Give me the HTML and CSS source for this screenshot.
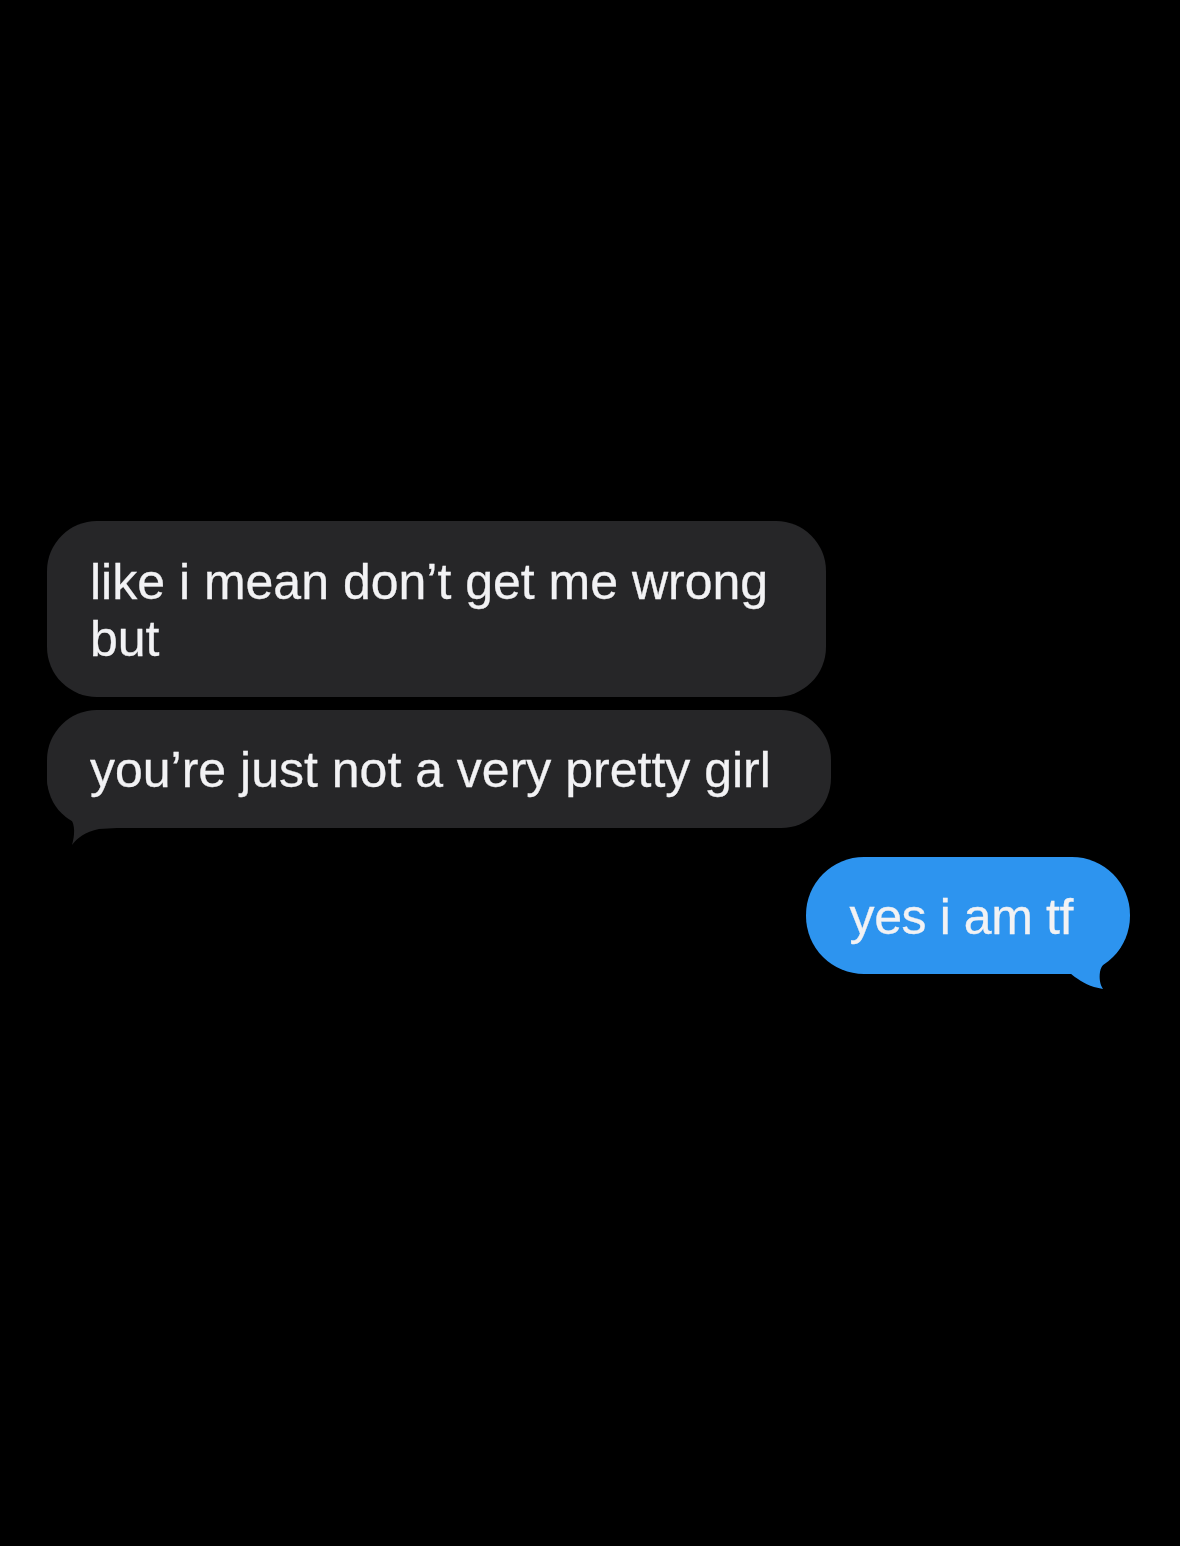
FILE: index.html
```html
<!DOCTYPE html>
<html>
<head>
    <title>Messages</title>
    <link rel="stylesheet" href="styles.css">
</head>
<body>
    <div class="thread">
        <div class="msg received">like i mean don’t get me wrong<br>but</div>
        <div class="msg received last">
            you’re just not a very pretty girl
            <svg class="tail tail-left" width="70" height="70" viewBox="0 0 70 70">
                <path d="M0 0 L0 5 C1 20 10 34 24 44 C28 50 28 60 25 70 C30 63 38 57 52 54 L70 53 L70 0 Z"/>
            </svg>
        </div>
        <div class="msg sent">
            yes i am tf
            <svg class="tail tail-right" width="70" height="50" viewBox="0 0 70 50">
                <path d="M0 0 L0 34 L10 33 C16 38 24 44 34 47 L43 49 C40 45 39 38 40 32 C41 25 47 20 56 13 C60 9 62 5 63 0 Z"/>
            </svg>
        </div>
    </div>
</body>
</html>
```

FILE: styles.css
```css
html, body { background: #000; }
body { margin: 0; min-height: 100vh; font-family: "Liberation Sans", Arial, sans-serif; }
.thread { display: flex; flex-direction: column; padding: 521px 50px 560px 47px; }
.msg { position: relative; z-index: 0; box-sizing: border-box; font-size: 50px; line-height: 57px; color: #f2f2f4; border-radius: 50px; -webkit-text-stroke: 0.3px #f2f2f4; }
.received { align-self: flex-start; background: #262628; padding: 33px 58px 29px 43px; margin-bottom: 13px; }
.received.last { padding: 32px 60px 29px 43px; margin-bottom: 29px; }
.sent { align-self: flex-end; background: #2d94ef; padding: 32px 57px 28px 44px; border-radius: 58px; letter-spacing: -0.4px; }
.tail { position: absolute; z-index: -1; display: block; overflow: visible; }
.tail-left { left: 0; top: calc(100% - 53px); fill: #262628; }
.tail-right { right: 0; top: calc(100% - 34px); fill: #2d94ef; }
```
